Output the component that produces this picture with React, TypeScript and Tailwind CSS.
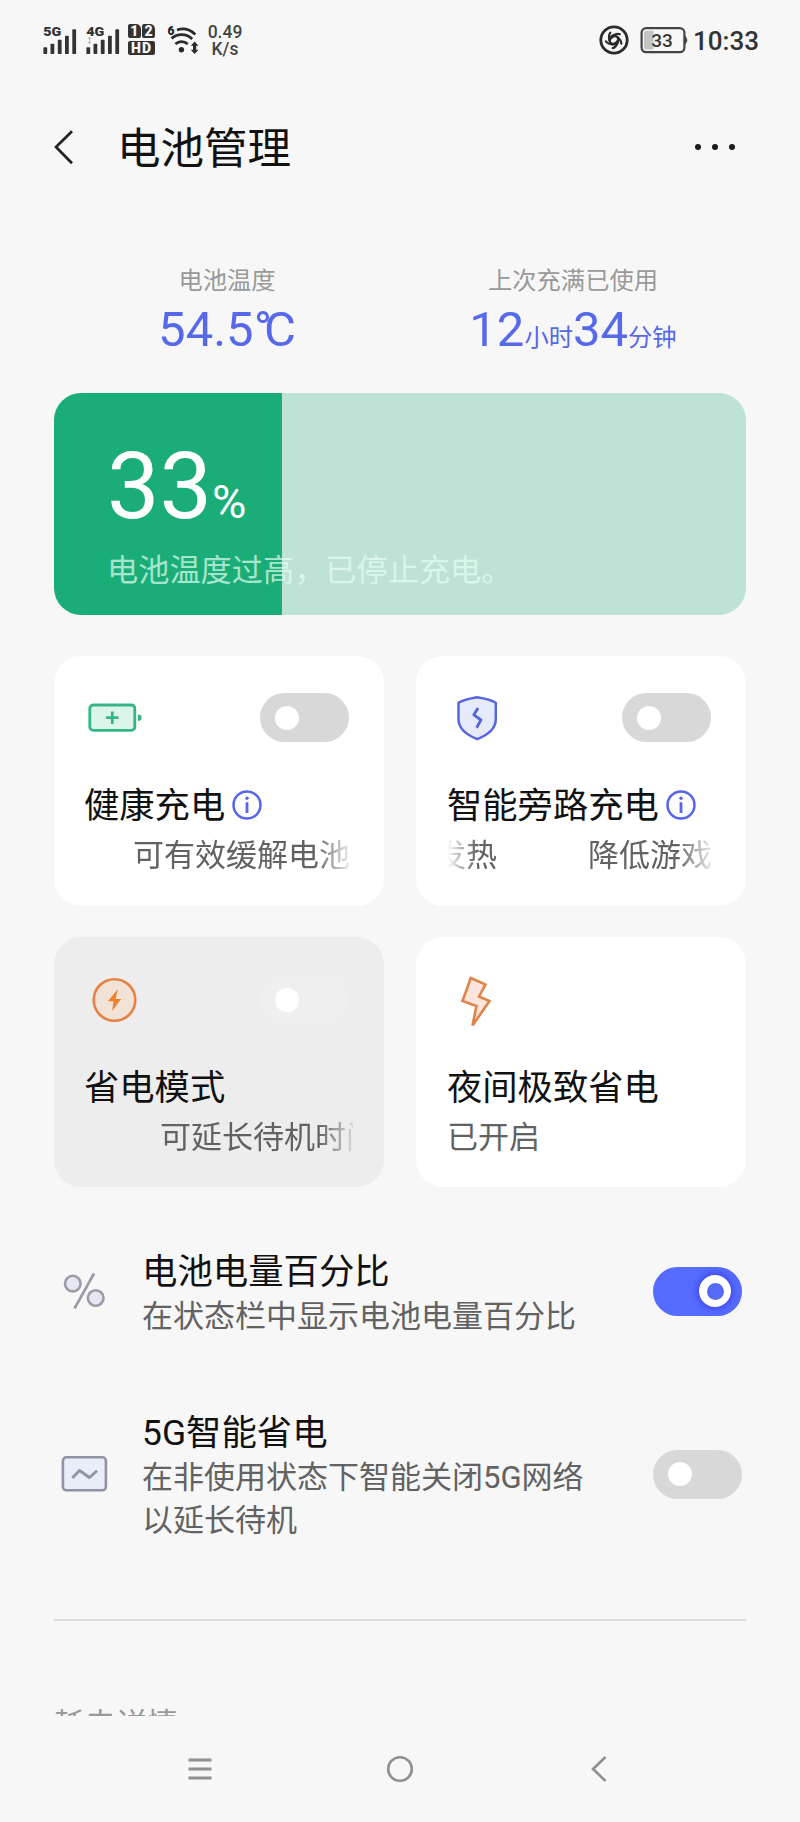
import React from "react";

function SignalBars({ label, faint }: { label: string; faint?: boolean }) {
  const bars = [
    [0.4, 23.3],
    [7.5, 19.7],
    [14.8, 15.7],
    [22, 11.7],
    [29.3, 5.3],
  ];
  return (
    <svg width="36" height="32" viewBox="0 0 36 32" className="shrink-0">
      {bars.map(([x, y]) => (
        <rect key={x} x={x} y={y} width="3.8" height={30 - y} rx="0.8" fill="#333" />
      ))}
      {faint && <path d="M3.5 13.5v6M2 15l1.5-1.8L5 15M2 18l1.5 1.8L5 18" stroke="#bbb" strokeWidth="1" fill="none" />}
      <text x="0.3" y="12.2" fontSize="12.8" fontWeight="900" fill="#333" textLength="18" lengthAdjust="spacingAndGlyphs" fontFamily="Roboto, sans-serif">
        {label}
      </text>
    </svg>
  );
}

function StatusBar() {
  return (
    <div className="flex h-[80px] shrink-0 items-start pt-6 pl-[43px] pr-[41px] text-[#333]">
      <SignalBars label="5G" />
      <div className="w-[7px]" />
      <SignalBars label="4G" faint />
      <div className="ml-[6px] grid h-[30px] w-[27px] grid-cols-2 gap-x-[1.5px] gap-y-[2.5px] text-center text-[14px] font-black leading-[14px] text-[#f7f7f7]">
        <span className="rounded-[2px] rounded-tr-[5px] bg-[#333]">1</span>
        <span className="rounded-[2px] rounded-tr-[5px] bg-[#333]">2</span>
        <span className="col-span-2 rounded-[2px] bg-[#333] tracking-[1px]">HD</span>
      </div>
      <svg width="34" height="32" viewBox="0 0 34 32" className="ml-[12px] shrink-0">
        <text x="0.6" y="11" fontSize="12" fontWeight="900" fill="#222" fontFamily="Roboto, sans-serif">6</text>
        <g fill="none" stroke="#2a2a2a" strokeWidth="2.8">
          <path d="M10 6C16 3.800 23 5.400 28.300 10.400" />
          <path d="M4.600 14.400C10.500 9.200 19.500 9.200 25.200 15" />
          <path d="M8.400 20C12 17 17 17 20.800 20" />
        </g>
        <circle cx="14.400" cy="25.800" r="2.700" fill="#2a2a2a" />
        <path d="M27.600 17.500l3.800 4.200h-2.200v4h2.200l-3.800 4.200-3.800-4.200h2.200v-4h-2.200z" fill="#2a2a2a" />
      </svg>
      <div className="ml-[6px] w-[36px] text-center text-[17.500px] font-medium leading-[17px] text-[#444]">
        <div>0.49</div>
        <div>K/s</div>
      </div>
      <div className="flex-1" />
      <svg width="32" height="32" viewBox="0 0 32 32" className="shrink-0">
        <circle cx="16" cy="16" r="13.200" fill="none" stroke="#2b2b2b" strokeWidth="2.800" />
        <circle cx="16" cy="16" r="5.600" fill="#2b2b2b" />
        <g fill="none" stroke="#2b2b2b" strokeWidth="2.200" strokeLinecap="round">
          {[0, 72, 144, 216, 288].map((a) => (
            <path key={a} d="M14.500 11.600C17 10.200 20 9.400 21.800 10.200" transform={`rotate(${a} 16 16)`} />
          ))}
        </g>
        <ellipse cx="16" cy="16" rx="3.300" ry="2.200" fill="#f7f7f7" transform="rotate(-38 16 16)" />
      </svg>
      <svg width="49" height="32" viewBox="0 0 49 32" className="ml-[9px] shrink-0">
        <rect x="2.600" y="4.200" width="42.800" height="24" rx="4.600" fill="#f7f7f7" stroke="#444" strokeWidth="2.200" />
        <path d="M6.500 6.800h8v18.600h-8a1.500 1.500 0 0 1-1.500-1.500v-15.600a1.500 1.500 0 0 1 1.500-1.500z" fill="#c4c4c4" />
        <path d="M46.400 12.500q3 3.700 0 7.400z" fill="#444" stroke="#444" />
        <text x="23" y="22.900" fontSize="19" fontWeight="500" fill="#333" textAnchor="middle" fontFamily="Roboto, sans-serif">33</text>
      </svg>
      <div className="ml-[5px] w-[66px] whitespace-nowrap text-[26px] font-medium leading-[34px] text-[#333]">10:33</div>
    </div>
  );
}

function Toggle({ on, tone = "bg-[#d8d8d8]" }: { on?: boolean; tone?: string }) {
  if (on) {
    return (
      <div className="flex h-[49px] w-[89px] shrink-0 items-center justify-end rounded-full bg-[#566bff] pr-[11px]">
        <div className="flex size-8 items-center justify-center rounded-full bg-white shadow-[0_0_7px_1px_rgba(40,40,220,0.7)]">
          <div className="size-[17px] rounded-full bg-[#566bf5]" />
        </div>
      </div>
    );
  }
  return (
    <div className={`flex h-[49px] w-[89px] shrink-0 items-center rounded-full pl-[15px] ${tone}`}>
      <div className="size-6 rounded-full bg-white" />
    </div>
  );
}

function InfoIcon() {
  return (
    <svg width="30" height="30" viewBox="0 0 30 30" className="shrink-0" fill="none" stroke="#5765ea">
      <circle cx="15" cy="15" r="13.500" strokeWidth="2.500" />
      <path d="M15 12.200V23" strokeWidth="2.800" />
      <circle cx="15" cy="8.300" r="1.700" fill="#5765ea" stroke="none" />
    </svg>
  );
}

const BatteryPlus = () => (
  <svg width="58" height="50" viewBox="0 0 58 50" fill="none">
    <rect x="5.800" y="12" width="45" height="25.400" rx="3.500" fill="#dcf5ea" stroke="#35b583" strokeWidth="2.800" />
    <path d="M28.300 18.500v12.400M22.100 24.700h12.400" stroke="#35b583" strokeWidth="2.800" />
    <path d="M54 21.500q3.600 0 3.600 3.200t-3.600 3.200z" fill="#35b583" />
  </svg>
);

const ShieldBolt = () => (
  <svg width="58" height="50" viewBox="0 0 58 50" fill="none" stroke="#5765e0" strokeLinejoin="round">
    <path d="M30.200 4.300C36 5.200 43.500 6.500 48.800 9.800V26C48.800 36 41 41.500 30.200 46.200C19.500 41.500 11.500 36 11.500 26V9.800C17 6.500 24.500 5.200 30.200 4.300Z" fill="#e6ebfb" strokeWidth="2.500" />
    <path d="M31 15l-4.200 6.800 7.200 5.200-4.400 7.800" strokeWidth="2.800" />
  </svg>
);

const CircleBolt = () => (
  <svg width="58" height="50" viewBox="0 0 58 50" fill="none">
    <circle cx="30.500" cy="25" r="20.800" fill="#f2e2d8" stroke="#e58344" strokeWidth="2.600" />
    <path d="M33.700 14L24 26.300h5.600L28 36 37.200 24h-5.400z" fill="#ee8130" />
  </svg>
);

const Bolt = () => (
  <svg width="58" height="54" viewBox="0 0 58 54" fill="none">
    <path d="M23.800 3L38.500 9.500 32 21.500 42.500 26 25.500 50.500 29.500 31 15.500 26Z" fill="#fbe5dc" stroke="#e08349" strokeWidth="2.600" />
  </svg>
);

const FADE = "[mask-image:linear-gradient(to_right,transparent,black_30px,black_calc(100%-34px),transparent_calc(100%+6px))]";

interface CardProps {
  icon: React.ReactNode;
  title: string;
  info?: boolean;
  toggle?: React.ReactNode;
  className: string;
  children: React.ReactNode;
}

function Card({ icon, title, info, toggle, className, children }: CardProps) {
  return (
    <section className={`flex h-[250px] flex-col overflow-hidden rounded-[27px] pr-[35px] ${className}`}>
      <div className="flex h-[49px] justify-between">
        {icon}
        {toggle}
      </div>
      <div className="mt-[39px] flex h-[50px] items-center">
        <h2 className="text-[35.300px] leading-[50px] text-[#111]">{title}</h2>
        {info && <div className="mb-[3px] ml-[7px]"><InfoIcon /></div>}
      </div>
      {children}
    </section>
  );
}

function ListRow({ icon, title, toggle, className, lines }: { icon: React.ReactNode; title: string; toggle: React.ReactNode; className: string; lines: string[] }) {
  return (
    <div className={`flex items-center pl-[6px] pr-[4px] ${className}`}>
      {icon}
      <div className="ml-[32px] flex-1 whitespace-nowrap pt-[5px]">
        <h3 className="text-[35.400px] leading-[45px] text-[#111]">{title}</h3>
        {lines.map((l) => (
          <p key={l} className="text-[31px] leading-[43px] text-[#626262]">{l}</p>
        ))}
      </div>
      {toggle}
    </div>
  );
}

export default function App() {
  return (
    <div className="flex h-[1822px] w-[800px] flex-col overflow-hidden bg-[#f7f7f7] font-[Roboto,'Noto_Sans_CJK_SC',sans-serif]">
      <StatusBar />
      <div className="flex h-[1636px] shrink-0 flex-col overflow-hidden px-[54px]">
        <header className="flex h-[136px] shrink-0 items-center pr-[11px]">
          <svg width="20" height="36" viewBox="0 0 20 36" fill="none" stroke="#222" strokeWidth="2.700">
            <path d="M18 1.200L2 17l16 16.200" />
          </svg>
          <h1 className="ml-[43px] pt-[4px] text-[43.500px] leading-[60px] text-[#111]">电池管理</h1>
          <div className="flex-1" />
          <div className="mb-[3px] flex gap-[11px]">
            <i className="size-[6px] rounded-full bg-[#1c1c1c]" />
            <i className="size-[6px] rounded-full bg-[#1c1c1c]" />
            <i className="size-[6px] rounded-full bg-[#1c1c1c]" />
          </div>
        </header>

        <div className="grid h-[177px] shrink-0 grid-cols-2 pt-[50px] text-center">
          <div>
            <div className="text-[24.300px] leading-[30px] text-[#999]">电池温度</div>
            <div className="text-[49px] leading-[68px] text-[#5569ea]">
              54.5<span className="tracking-[-8px]">°</span>C
            </div>
          </div>
          <div>
            <div className="text-[24.300px] leading-[30px] text-[#999]">上次充满已使用</div>
            <div className="text-[49px] leading-[68px] text-[#5569ea]">
              12<span className="text-[24.300px]">小时</span>34<span className="text-[24.300px]">分钟</span>
            </div>
          </div>
        </div>

        <div className="h-[222px] shrink-0 overflow-hidden rounded-[27px] bg-[linear-gradient(to_right,#1aad77_33%,#bee3d6_33%)] pt-[43px] pl-[53px]">
          <div className="h-[100px] text-[93.500px] leading-[100px] text-white">
            33<span className="text-[47px]">%</span>
          </div>
          <div className="mt-[13px] text-[31.200px] leading-[44px] text-[#e4fff3]/70">电池温度过高，已停止充电。</div>
        </div>

        <div className="mt-[41px] grid shrink-0 grid-cols-[330px_330px] justify-between gap-y-[31px]">
          <Card icon={<BatteryPlus />} title="健康充电" info toggle={<Toggle />} className="bg-white pt-[37px] pl-[30px]">
            <div className={`overflow-hidden whitespace-nowrap pl-[49px] text-[31px] leading-[50px] text-[#626262] ${FADE}`}>可有效缓解电池</div>
          </Card>
          <Card icon={<ShieldBolt />} title="智能旁路充电" info toggle={<Toggle />} className="bg-white pt-[37px] pl-[31px]">
            <div className={`flex overflow-hidden whitespace-nowrap text-[31px] leading-[50px] text-[#626262] ${FADE}`}>
              <span className="-ml-[12px]">发热</span>
              <span className="ml-[91px]">降低游戏</span>
            </div>
          </Card>
          <Card icon={<CircleBolt />} title="省电模式" toggle={<Toggle tone="bg-[#efefef]" />} className="bg-[#ededed] pt-[38px] pl-[30px]">
            <div className={`-mr-[4px] overflow-hidden whitespace-nowrap pl-[76px] text-[31px] leading-[50px] text-[#626262] ${FADE}`}>可延长待机时间</div>
          </Card>
          <Card icon={<Bolt />} title="夜间极致省电" className="bg-white pt-[38px] pl-[31px]">
            <div className="text-[31px] leading-[50px] text-[#626262]">已开启</div>
          </Card>
        </div>

        <ListRow
          className="mt-[60px] h-[88px] shrink-0"
          title="电池电量百分比"
          lines={["在状态栏中显示电池电量百分比"]}
          toggle={<Toggle on />}
          icon={
            <svg width="50" height="44" viewBox="0 0 50 44" fill="#e7e7f1" stroke="#9a9aa8" strokeWidth="2.600">
              <circle cx="12.800" cy="14.600" r="7.800" />
              <circle cx="35.700" cy="29" r="7.800" />
              <path d="M34 4.500L14.500 39.500" />
            </svg>
          }
        />
        <ListRow
          className="mt-[72px] h-[134px] shrink-0"
          title="5G智能省电"
          lines={["在非使用状态下智能关闭5G网络", "以延长待机"]}
          toggle={<Toggle />}
          icon={
            <svg width="50" height="44" viewBox="0 0 50 44" fill="none" stroke="#8f93a3" strokeLinejoin="round">
              <rect x="2.900" y="5.300" width="43" height="33" rx="3.500" fill="#e9edf7" strokeWidth="2.600" />
              <path d="M12.300 26l7.200-7.500 10 7L37 18.800" strokeWidth="2.800" />
            </svg>
          }
        />
        <div className="mt-[78px] h-[2px] shrink-0 bg-[#dcdcdc]" />
        <div className="mt-[82px] shrink-0 text-[31px] leading-[44px] text-[#999]">耗电详情</div>
      </div>

      <nav className="flex h-[106px] items-center justify-center gap-[168px]">
        <svg width="32" height="32" viewBox="0 0 32 32" fill="none" stroke="#909090" strokeWidth="2.800">
          <path d="M4.500 7h23M4.500 16h23M4.500 25h23" />
        </svg>
        <svg width="32" height="32" viewBox="0 0 32 32" fill="none" stroke="#909090" strokeWidth="2.600">
          <circle cx="16" cy="16" r="11.800" />
        </svg>
        <svg width="32" height="32" viewBox="0 0 32 32" fill="none" stroke="#909090" strokeWidth="2.600">
          <path d="M21.500 4L9 16 21.500 28" />
        </svg>
      </nav>
    </div>
  );
}
